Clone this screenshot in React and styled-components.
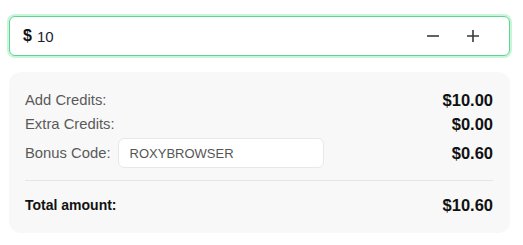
import styled, { createGlobalStyle } from 'styled-components';

const Global = createGlobalStyle`
  body {
    margin: 0;
    background: #fff;
    font-family: "Liberation Sans", Arial, sans-serif;
  }
`;

export default function App() {
    return (
        <>
            <Global />
            <Wrap>
                <AmountBox>
                    <Dollar>$</Dollar>
                    <AmountValue>10</AmountValue>
                    <StepButton aria-label="decrease">
                        <svg width="14" height="14" viewBox="0 0 14 14">
                            <path d="M1 7h12" stroke="#3a3a3a" strokeWidth="1.6" />
                        </svg>
                    </StepButton>
                    <StepButton aria-label="increase">
                        <svg width="14" height="14" viewBox="0 0 14 14">
                            <path d="M1 7h12M7 1v12" stroke="#3a3a3a" strokeWidth="1.6" />
                        </svg>
                    </StepButton>
                </AmountBox>
                <Summary>
                    <Row>
                        <Label>Add Credits:</Label>
                        <Value>$10.00</Value>
                    </Row>
                    <Row>
                        <Label>Extra Credits:</Label>
                        <Value>$0.00</Value>
                    </Row>
                    <Row>
                        <Label>Bonus Code:</Label>
                        <CodeInput>ROXYBROWSER</CodeInput>
                        <Value>$0.60</Value>
                    </Row>
                    <Divider />
                    <Row>
                        <Label $strong>Total amount:</Label>
                        <Value>$10.60</Value>
                    </Row>
                </Summary>
            </Wrap>
        </>
    );
}

const Wrap = styled.div`
    padding: 16px 13px 0 9px;
    display: flex;
    flex-direction: column;
    gap: 16px;
`;

const AmountBox = styled.div`
    height: 40px;
    box-sizing: border-box;
    border: 1px solid #5fd38f;
    box-shadow: 0 0 0 2px #c9f5da;
    border-radius: 6px;
    display: flex;
    align-items: center;
    padding: 0 29px 0 13px;
`;

const Dollar = styled.span`
    font-weight: 700;
    font-size: 16px;
    color: #111;
    margin-right: 5px;
`;

const AmountValue = styled.span`
    font-size: 15px;
    color: #1a2233;
    flex: 1;
`;

const StepButton = styled.span`
    width: 14px;
    height: 14px;
    display: flex;
    margin-left: 26px;
`;

const Summary = styled.div`
    background: #f8f8f8;
    border-radius: 12px;
    padding: 18px 17px 18px 16px;
    display: flex;
    flex-direction: column;
    gap: 4px;
`;

const Row = styled.div`
    display: flex;
    align-items: center;
    min-height: 20px;
`;

const Label = styled.span`
    font-size: ${p => (p.$strong ? '14px' : '14.8px')};
    color: ${p => (p.$strong ? '#111' : '#5a5a5a')};
    font-weight: ${p => (p.$strong ? 700 : 400)};
`;

const Value = styled.span`
    margin-left: auto;
    font-size: 16.5px;
    font-weight: 700;
    color: #111;
`;

const CodeInput = styled.div`
    margin-left: 7px;
    width: 206px;
    height: 30px;
    box-sizing: border-box;
    background: #fff;
    border: 1px solid #e6e8ec;
    border-radius: 6px;
    display: flex;
    align-items: center;
    padding-left: 11px;
    font-size: 13px;
    color: #555;
`;

const Divider = styled.div`
    height: 1px;
    background: #e6e6e8;
    margin: 8px 0 10px;
`;
